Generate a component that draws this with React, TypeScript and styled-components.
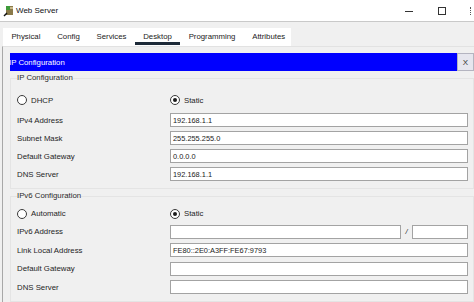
import styled, { createGlobalStyle } from "styled-components"

const Global = createGlobalStyle`
    html, body {
        margin: 0;
        padding: 0;
        background: #f0f0f0;
        overflow: hidden;
    }
`

const Window = styled.div`
    width: 474px;
    height: 302px;
    background: #f0f0f0;
    display: flex;
    flex-direction: column;
    overflow: hidden;
    font-family: "Liberation Sans", Arial, sans-serif;
    color: #1e1e1e;
`
const TitleBar = styled.div`
    height: 21px;
    flex: none;
    background: white;
    border-bottom: 1px solid #c9c9c9;
    display: flex;
    align-items: center;
    padding-left: 3px;
    font-size: 8px;
`
const Title = styled.span`
    margin-left: 2px;
    color: #111;
`
const Controls = styled.div`
    margin-left: auto;
    display: flex;
    align-items: center;
    height: 100%;
`
const MinBtn = styled.div`
    width: 8px;
    height: 1px;
    background: #333;
    margin-right: 25px;
    margin-top: 1px;
`
const MaxBtn = styled.div`
    width: 6px;
    height: 6px;
    border: 1px solid #333;
    margin-right: 24px;
`
const CloseDots = styled.div`
    width: 3px;
    height: 8px;
    border-left: 1px dotted #555;
`

const TabStrip = styled.div`
    margin: 6px 0 0 3px;
    width: 288px;
    height: 18px;
    flex: none;
    background: white;
    display: flex;
    font-size: 7.8px;
`
const Tab = styled.div<{ $active?: boolean }>`
    padding: 0 8.4px 1px;
    display: flex;
    align-items: center;
    position: relative;
    color: #222;
    &::after {
        content: "";
        display: ${p => (p.$active ? 'block' : 'none')};
        position: absolute;
        left: 0;
        right: 0;
        bottom: 1px;
        height: 3px;
        background: #1d2a38;
    }
`

const Panel = styled.div`
    flex: 1;
    margin-left: 2px;
    border-left: 1px solid #a8a8a8;
    border-top: 1px solid #e2e2e2;
    padding: 6px 0 0 7px;
    display: flex;
    flex-direction: column;
    min-height: 0;
`
const Header = styled.div`
    height: 18px;
    flex: none;
    display: flex;
`
const HeaderBar = styled.div`
    flex: 1;
    background: #0000ff;
    color: white;
    font-size: 7.8px;
    display: flex;
    align-items: center;
    text-indent: -1px;
    overflow: hidden;
`
const HeaderClose = styled.div`
    width: 17px;
    background: #e6e6ee;
    border: 1px solid #b4b4c0;
    box-sizing: border-box;
    display: flex;
    align-items: center;
    justify-content: center;
    font-size: 8px;
    color: #333;
`

const Group = styled.fieldset<{ $top: number; $gap: number; $mt: number }>`
    margin: ${p => p.$mt}px 0 0 0;
    padding: ${p => p.$top}px 5px 7px 6px;
    border: 1px solid #e4e4e4;
    display: flex;
    flex-direction: column;
    gap: ${p => p.$gap}px;
    min-width: 0;
`
const Legend = styled.legend`
    padding: 0;
    font-size: 7.8px;
    line-height: 10px;
    color: #2a2a2a;
`
const RadioRow = styled.div<{ $after: number }>`
    display: grid;
    grid-template-columns: 153px 1fr;
    height: 12px;
    align-items: center;
    margin-bottom: ${p => p.$after}px;
    font-size: 7.8px;
`
const RadioItem = styled.label`
    display: flex;
    align-items: center;
    gap: 4px;
`
const RadioCircle = styled.span<{ $checked?: boolean }>`
    width: 10px;
    height: 10px;
    box-sizing: border-box;
    border-radius: 50%;
    border: 1px solid #3a3a3a;
    background: white;
    display: flex;
    align-items: center;
    justify-content: center;
    &::after {
        content: "";
        display: ${p => (p.$checked ? 'block' : 'none')};
        width: 4px;
        height: 4px;
        border-radius: 50%;
        background: #1a1a1a;
    }
`
const FieldRow = styled.div`
    display: grid;
    grid-template-columns: 153px 1fr;
    align-items: center;
    height: 14px;
    font-size: 7.8px;
`
const InputPair = styled.div`
    display: flex;
    align-items: center;
    height: 100%;
`
const Input = styled.div<{ $w?: number }>`
    ${p => (p.$w ? `width: ${p.$w}px; flex: none;` : 'flex: 1;')}
    height: 14px;
    box-sizing: border-box;
    border: 1px solid #a3a3a3;
    background: white;
    font-size: 7.4px;
    padding-left: 2px;
    display: flex;
    align-items: center;
    color: #222;
`
const Slash = styled.span`
    width: 11px;
    flex: none;
    text-align: center;
    font-size: 7.5px;
    font-style: italic;
`

function AppIcon() {
    return (
        <svg width="11" height="12" viewBox="0 0 11 12">
            <rect x="3" y="1" width="7" height="9" fill="#8a7a4a" />
            <rect x="3" y="1" width="4" height="4" fill="#3f9a3a" />
            <rect x="7" y="2" width="3" height="2" fill="#c9b98a" />
            <path d="M4 8 L1 11" stroke="#111" strokeWidth="1.4" />
        </svg>
    )
}

function Radio({ label, checked }: { label: string; checked?: boolean }) {
    return (
        <RadioItem>
            <RadioCircle $checked={checked} />
            {label}
        </RadioItem>
    )
}

const tabs = ['Physical', 'Config', 'Services', 'Desktop', 'Programming', 'Attributes']

export default function App() {
    return (
        <Window>
            <Global />
            <TitleBar>
                <AppIcon />
                <Title>Web Server</Title>
                <Controls>
                    <MinBtn />
                    <MaxBtn />
                    <CloseDots />
                </Controls>
            </TitleBar>
            <TabStrip>
                {tabs.map(t => (
                    <Tab key={t} $active={t === 'Desktop'}>{t}</Tab>
                ))}
            </TabStrip>
            <Panel>
                <Header>
                    <HeaderBar>IP Configuration</HeaderBar>
                    <HeaderClose>X</HeaderClose>
                </Header>
                <Group $mt={2} $top={11} $gap={4}>
                    <Legend>IP Configuration</Legend>
                    <RadioRow $after={3}>
                        <Radio label="DHCP" />
                        <Radio label="Static" checked />
                    </RadioRow>
                    <FieldRow>IPv4 Address<Input>192.168.1.1</Input></FieldRow>
                    <FieldRow>Subnet Mask<Input>255.255.255.0</Input></FieldRow>
                    <FieldRow>Default Gateway<Input>0.0.0.0</Input></FieldRow>
                    <FieldRow>DNS Server<Input>192.168.1.1</Input></FieldRow>
                </Group>
                <Group $mt={2} $top={6.5} $gap={4.5}>
                    <Legend>IPv6 Configuration</Legend>
                    <RadioRow $after={0.5}>
                        <Radio label="Automatic" />
                        <Radio label="Static" checked />
                    </RadioRow>
                    <FieldRow>
                        IPv6 Address
                        <InputPair>
                            <Input />
                            <Slash>/</Slash>
                            <Input $w={56} />
                        </InputPair>
                    </FieldRow>
                    <FieldRow>Link Local Address<Input>FE80::2E0:A3FF:FE67:9793</Input></FieldRow>
                    <FieldRow>Default Gateway<Input /></FieldRow>
                    <FieldRow>DNS Server<Input /></FieldRow>
                </Group>
            </Panel>
        </Window>
    )
}
